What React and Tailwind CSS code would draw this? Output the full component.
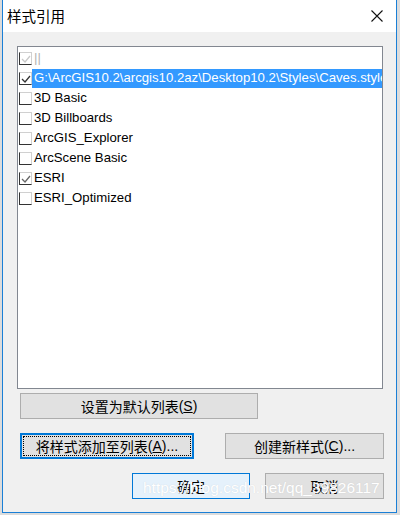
import React from "react";

const latin = { fontFamily: '"Liberation Sans", Arial, "Noto Sans CJK SC", sans-serif' };
const cjk = { fontFamily: '"Noto Sans CJK SC", "Liberation Sans", sans-serif' };

function Check({ state, color }) {
  return (
    <span className="relative inline-block w-[13px] h-[13px] shrink-0 border-l border-b border-t border-r border-l-[#333] border-b-[#333] border-t-[#d0d0d0] border-r-[#d0d0d0] bg-white">
      {state && (
        <svg className="absolute left-[0px] top-[0px]" width="12" height="12" viewBox="0 0 12 12">
          <polyline points="2,6 5,9 10,3" fill="none" stroke={color} strokeWidth="1.3" />
        </svg>
      )}
    </span>
  );
}

const rows = [
  { label: "||", checked: true, color: "#c8c8c8", gray: true },
  { label: "G:\\ArcGIS10.2\\arcgis10.2az\\Desktop10.2\\Styles\\Caves.style", checked: true, color: "#333", sel: true },
  { label: "3D Basic" },
  { label: "3D Billboards" },
  { label: "ArcGIS_Explorer" },
  { label: "ArcScene Basic" },
  { label: "ESRI", checked: true, color: "#666" },
  { label: "ESRI_Optimized" },
];

function Btn({ children, className = "" }) {
  return (
    <div className={"flex items-center justify-center h-[26px] bg-[#e1e1e1] border border-[#adadad] text-[14px] text-black " + className}>
      {children}
    </div>
  );
}

export default function App() {
  return (
    <div className="w-[400px] h-[515px] bg-[#dcdcdc] pl-[2px] overflow-hidden relative">
      <div className="w-[395px] h-[513px] border-l border-r border-b border-[#1a7fd6] bg-[#f0f0f0] flex flex-col">
        <div className="h-[32px] bg-white flex items-center justify-between pl-[4px] pr-[13px]">
          <span className="text-[14.5px] text-black" style={cjk}>样式引用</span>
          <svg width="12" height="12" viewBox="0 0 12 12">
            <path d="M0.5 0.5 L11.5 11.5 M11.5 0.5 L0.5 11.5" stroke="#111" strokeWidth="1.1" />
          </svg>
        </div>
        <div className="ml-[14px] mt-[14px] w-[366px] h-[343px] border border-[#828790] bg-white pt-[1px] overflow-hidden">
          {rows.map((r, i) => (
            <div key={i} className="flex items-center h-[20px] pl-[1px]">
              <Check state={r.checked} color={r.color} />
              <div
                className={
                  "flex items-center h-[19px] pl-[2px] flex-1 whitespace-nowrap overflow-hidden text-[13.2px] " +
                  (r.sel ? "bg-[#3399ff] text-white" : r.gray ? "text-[#b4b4b4]" : "text-black")
                }
                style={latin}
              >
                {r.label}
              </div>
            </div>
          ))}
        </div>
        <div className="ml-[17px] mt-[4px]">
          <Btn className="w-[238px]">
            <span style={cjk}>设置为默认列表</span>
            <span style={latin}>(<span className="underline">S</span>)</span>
          </Btn>
        </div>
        <div className="ml-[17px] mt-[14px] flex gap-[31px]">
          <div className="w-[174px] h-[26px] border-2 border-[#0078d7] bg-[#e1e1e1] p-[1px]">
            <div className="w-full h-full border border-dotted border-black flex items-center justify-center text-[14px]">
              <span style={cjk}>将样式添加至列表</span>
              <span style={latin}>(<span className="underline">A</span>)...</span>
            </div>
          </div>
          <Btn className="w-[159px]">
            <span style={cjk}>创建新样式</span>
            <span style={latin}>(<span className="underline">C</span>)...</span>
          </Btn>
        </div>
        <div className="ml-[129px] mt-[14px] flex gap-[15px]">
          <div className="w-[118px] h-[26px] border border-[#0078d7] bg-[#e5f1fb] flex items-center justify-center text-[14px]" style={cjk}>确定</div>
          <Btn className="w-[119px]"><span style={cjk}>取消</span></Btn>
        </div>
      </div>
      <div
        className="absolute left-[143px] top-[476px] text-[15.5px] text-white whitespace-nowrap pointer-events-none"
        style={{ ...latin, textShadow: "0 0 1px rgba(150,150,150,0.3)" }}
      >
        https://blog.csdn.net/qq_39826117
      </div>
    </div>
  );
}
